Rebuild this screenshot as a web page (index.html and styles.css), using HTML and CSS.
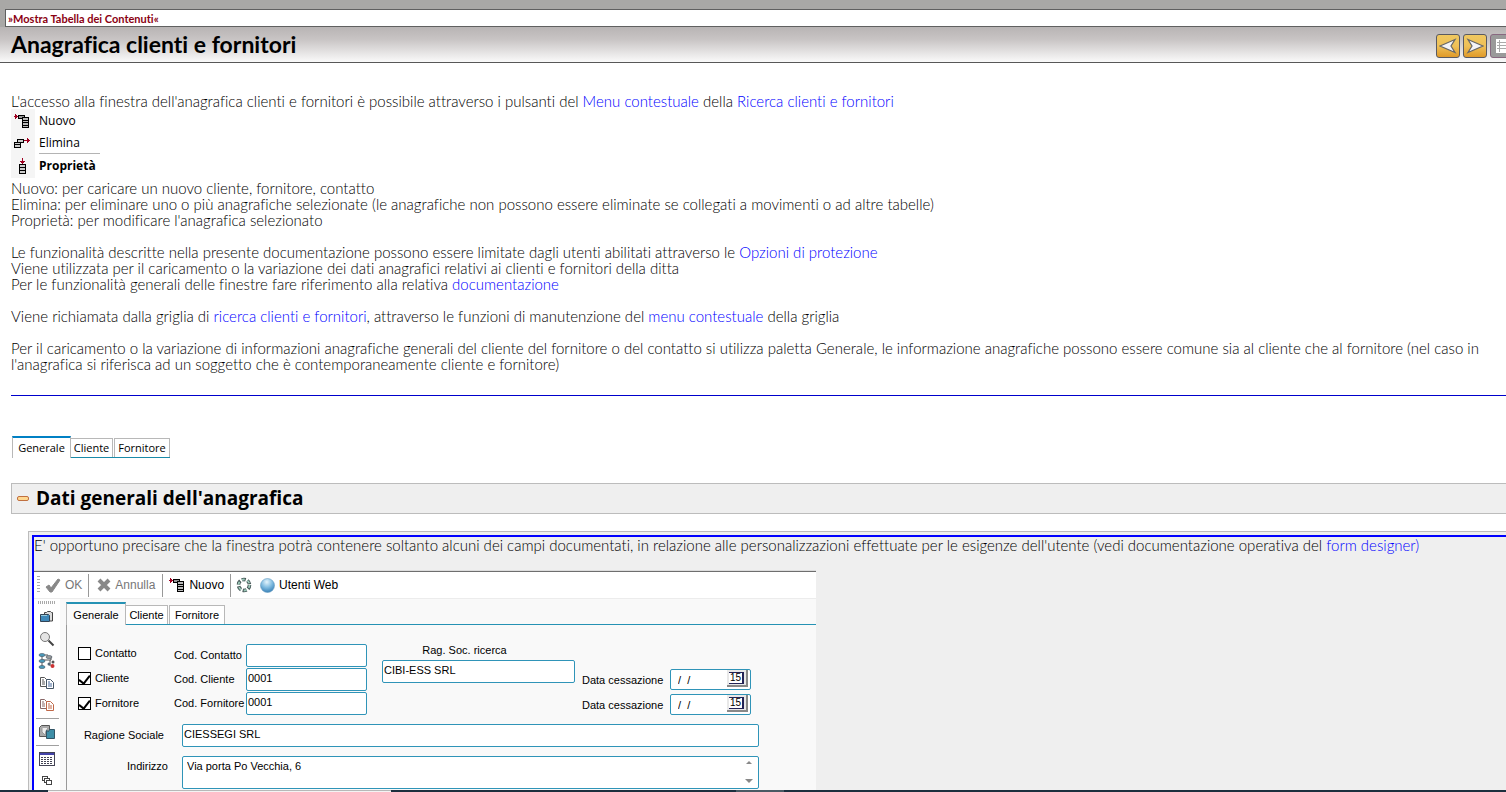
FILE: index.html
```html
<!DOCTYPE html>
<html lang="it">
<head>
<meta charset="utf-8">
<title>Anagrafica clienti e fornitori</title>
<link rel="stylesheet" href="styles.css">
</head>
<body>
<svg class="defs" aria-hidden="true">
  <symbol id="i-new" viewBox="0 0 16 14" shape-rendering="crispEdges">
    <path d="M0 2h4v1H0zM1 0h1v5H1zM2 1h1v3H2z" fill="#a00020"/>
    <path d="M4.500 1.500h6v3h-6z" fill="#999" stroke="#000"/>
    <path d="M8.500 3.500h6v10h-6z" fill="#bbb" stroke="#000"/>
    <path d="M9 6h5v1H9zM9 8h5v1H9zM9 11h5v1H9z" fill="#000"/>
  </symbol>
</svg>

<header class="topbar">
  <div class="toc"><a href="#toc">»Mostra Tabella dei Contenuti«</a></div>
  <div class="titlebar">
    <h1>Anagrafica clienti e fornitori</h1>
    <nav class="pager" aria-label="Pagine">
      <button type="button" class="nav-btn" aria-label="Precedente"><svg width="18" height="16" viewBox="0 0 18 16"><path d="M1 8 16 1.500 12 8l4 6.500z" fill="#f4f4f8" stroke="#666" stroke-width="1.200"/></svg></button>
      <button type="button" class="nav-btn" aria-label="Successiva"><svg width="18" height="16" viewBox="0 0 18 16"><path d="M17 8 2 1.500 6 8l-4 6.500z" fill="#f4f4f8" stroke="#666" stroke-width="1.200"/></svg></button>
      <button type="button" class="nav-btn nav-grey" aria-label="Indice"><svg width="14" height="16" viewBox="0 0 14 16" shape-rendering="crispEdges"><path d="M1 1h13v14H1z" fill="#fff"/><path d="M2 4h12v1H2zM2 7h12v1H2zM2 10h12v1H2zM4 2h1v12H4z" fill="#aaa"/></svg></button>
    </nav>
  </div>
</header>

<main class="content">
  <p>L'accesso alla finestra dell'anagrafica clienti e fornitori è possibile attraverso i pulsanti del <a href="#menu">Menu contestuale</a> della <a href="#ricerca">Ricerca clienti e fornitori</a></p>
  <ul class="ctx">
    <li><span class="ctx-icon"><svg width="16" height="14"><use href="#i-new"/></svg></span><span>Nuovo</span></li>
    <li><span class="ctx-icon"><svg width="16" height="12" viewBox="0 0 16 12" shape-rendering="crispEdges"><path d="M3.500 2.500h6v3h-6zM.500 5.500h6v5h-6z" fill="#ccc" stroke="#000"/><path d="M1 7h5v1H1z"/><path d="M10 3h6v1h-6zM13 1h1v5h-1zM14 2h1v3h-1z" fill="#a00020"/></svg></span><span class="ruled">Elimina</span></li>
    <li class="strong"><span class="ctx-icon"><svg width="9" height="16" viewBox="0 0 9 16" shape-rendering="crispEdges"><path d="M1.500 6.500h6v9h-6z" fill="#ccc" stroke="#000"/><path d="M2 9h5v1H2zM2 12h5v1H2z"/><path d="M4 0h1v6H4zM2 3h5v1H2zM3 4h3v1H3z" fill="#a00020"/></svg></span><span>Proprietà</span></li>
  </ul>
  <p>Nuovo: per caricare un nuovo cliente, fornitore, contatto<br>
  Elimina: per eliminare uno o più anagrafiche selezionate (le anagrafiche non possono essere eliminate se collegati a movimenti o ad altre tabelle)<br>
  Proprietà: per modificare l'anagrafica selezionato</p>
  <p class="para">Le funzionalità descritte nella presente documentazione possono essere limitate dagli utenti abilitati attraverso le <a href="#protezione">Opzioni di protezione</a><br>
  Viene utilizzata per il caricamento o la variazione dei dati anagrafici relativi ai clienti e fornitori della ditta<br>
  Per le funzionalità generali delle finestre fare riferimento alla relativa <a href="#documentazione">documentazione</a></p>
  <p class="para">Viene richiamata dalla griglia di <a href="#ricerca">ricerca clienti e fornitori</a>, attraverso le funzioni di manutenzione del <a href="#menu">menu contestuale</a> della griglia</p>
  <p class="para">Per il caricamento o la variazione di informazioni anagrafiche generali del cliente del fornitore o del contatto si utilizza paletta Generale, le informazione anagrafiche possono essere comune sia al cliente che al fornitore (nel caso in<br>
  l'anagrafica si riferisca ad un soggetto che è contemporaneamente cliente e fornitore)</p>
  <hr>
  <div class="tabs tabs-doc">
    <button type="button" class="tab active">Generale</button><button type="button" class="tab">Cliente</button><button type="button" class="tab">Fornitore</button>
  </div>

  <h2 class="section"><svg width="12" height="5" viewBox="0 0 12 5"><rect x=".500" y=".500" width="11" height="4" rx="1.500" fill="#ffd890" stroke="#c07040"/></svg>Dati generali dell'anagrafica</h2>

  <section class="frame">
    <div class="frame-in">
      <p>E' opportuno precisare che la finestra potrà contenere soltanto alcuni dei campi documentati, in relazione alle personalizzazioni effettuate per le esigenze dell'utente (vedi documentazione operativa del <a href="#form">form designer)</a></p>
      <div class="app">
        <div class="toolbar">
          <span class="grip"></span>
          <button type="button" class="tool off t-ok"><svg width="16" height="15" viewBox="0 0 16 15"><path d="M1 9 4 7l2 3L13 1l2 1L7 14H5z" fill="#888" stroke="#888"/></svg>OK</button>
          <button type="button" class="tool off t-no"><svg width="14" height="14" viewBox="0 0 14 14"><path d="M2 2l10 10M12 2 2 12" stroke="#888" stroke-width="4"/></svg>Annulla</button>
          <button type="button" class="tool t-new"><svg width="16" height="14"><use href="#i-new"/></svg>Nuovo</button>
          <button type="button" class="tool t-cycle" aria-label="Aggiorna"><svg width="16" height="16" viewBox="0 0 16 16"><circle cx="8" cy="8" r="5.500" fill="none" stroke="#455" stroke-width="3.600" stroke-dasharray="4 1.760"/><circle cx="8" cy="8" r="5.500" fill="none" stroke="#9cc8b8" stroke-width="1.800" stroke-dasharray="3 2.760"/></svg></button>
          <button type="button" class="tool"><svg width="15" height="15" viewBox="0 0 15 15"><defs><radialGradient id="globe" cx=".45" cy=".25" r=".8"><stop offset="0" stop-color="#e4f4fc"/><stop offset=".5" stop-color="#7fbbe0"/><stop offset="1" stop-color="#2f78b0"/></radialGradient></defs><circle cx="7.500" cy="7.500" r="7" fill="url(#globe)" stroke="#6aa0c4" stroke-width=".600"/></svg>Utenti Web</button>
        </div>
        <div class="work">
          <aside class="side">
            <span class="hgrip"></span>
            <button type="button" aria-label="Apri"><svg width="16" height="16" viewBox="0 0 16 16"><path d="M5.500 6V3.500h2l1-1h3l1 1h1V12H11" fill="#ddd" stroke="#444"/><path d="M1.500 5.500h8l1 1v6h-9z" fill="#3f88b8" stroke="#345"/><path d="M2 6h6v1H2z" fill="#9cd"/></svg></button>
            <button type="button" aria-label="Cerca"><svg width="16" height="16" viewBox="0 0 16 16"><circle cx="6" cy="6" r="4.500" fill="#e4e4e4" stroke="#777"/><path d="m9.500 9.500 5 5" stroke="#444" stroke-width="2"/></svg></button>
            <button type="button" aria-label="Struttura"><svg width="18" height="18" viewBox="0 0 18 18"><path d="M4 3v12M5 8h8V4M12 8v6M7 3h3" fill="none" stroke="#555"/><g fill="#4a98b8" stroke="#456" stroke-width=".600"><ellipse cx="4" cy="3" rx="3" ry="1.600"/><ellipse cx="4" cy="9" rx="3" ry="1.600"/><ellipse cx="4" cy="15" rx="3" ry="1.600"/><ellipse cx="11" cy="5" rx="3" ry="1.600" fill="#999"/></g><circle cx="11" cy="12" r="1.500" fill="#567"/><circle cx="15" cy="10" r="1.500" fill="#555"/><circle cx="14.500" cy="14" r="2" fill="#c33"/></svg></button>
            <button type="button" aria-label="Copia"><svg width="16" height="14" viewBox="0 0 16 14"><path d="M1.500 1.500h4l2 2v7h-6z" fill="#fff" stroke="#555"/><path d="M3 4h2M3 6h3M3 8h3" stroke="#555"/><path d="M7.500 3.500h4l3 3v6h-7z" fill="#fff" stroke="#456"/><path d="M9 6h2M9 8h4M9 10h4" stroke="#469"/></svg></button>
            <button type="button" aria-label="Incolla"><svg width="16" height="14" viewBox="0 0 16 14"><path d="M1.500 1.500h4l2 2v7h-6z" fill="#fff" stroke="#866"/><path d="M3 4h2M3 6h3M3 8h3" stroke="#866"/><path d="M7.500 3.500h4l3 3v6h-7z" fill="#fff" stroke="#c06848"/><path d="M9 6h2M9 8h4M9 10h4" stroke="#c06848"/></svg></button>
            <span class="rule"></span>
            <button type="button" aria-label="Archivio"><svg width="16" height="16" viewBox="0 0 16 16"><path d="M.500 3.500l2-2h8v11H.500z" fill="#aaa" stroke="#555"/><path d="M3 4v4l3 3 1-4 2-3" fill="#eee" stroke="#999"/><path d="M7.500 6.500l2 1 1-2h5v9h-8z" fill="#3f8fa8" stroke="#356"/></svg></button>
            <span class="rule"></span>
            <button type="button" aria-label="Tabella"><svg width="16" height="14" viewBox="0 0 16 14" shape-rendering="crispEdges"><path d="M.500.500h15v13H.500z" fill="#fff" stroke="#445"/><path d="M1 1h14v2H1z" fill="#44a"/><path d="M2 5.500h12M2 7.500h12M2 9.500h12M2 11.500h12" stroke="#445" stroke-dasharray="2 1"/></svg></button>
            <button type="button" aria-label="Finestre"><svg width="12" height="10" viewBox="0 0 12 10" shape-rendering="crispEdges"><g fill="#fff" stroke="#444"><path d="M1.500.500h5v4h-5z"/><path d="M3.500 2.500h5v4h-5z"/><path d="M5.500 4.500h5v4h-5z"/></g></svg></button>
          </aside>
          <div class="panel">
            <div class="tabs tabs-app">
              <button type="button" class="tab active">Generale</button><button type="button" class="tab">Cliente</button><button type="button" class="tab">Fornitore</button>
            </div>
            <form class="form">
              <div class="top">
                <div class="checks">
                  <label><input type="checkbox">Contatto</label>
                  <label><input type="checkbox" checked>Cliente</label>
                  <label><input type="checkbox" checked>Fornitore</label>
                </div>
                <div class="codes">
                  <label for="c1">Cod. Contatto</label><input class="field" id="c1" type="text">
                  <label for="c2">Cod. Cliente</label><input class="field" id="c2" type="text" value="0001">
                  <label for="c3">Cod. Fornitore</label><input class="field" id="c3" type="text" value="0001">
                </div>
                <div class="rag">
                  <label for="rs">Rag. Soc. ricerca</label><input class="field" id="rs" type="text" value="CIBI-ESS SRL">
                </div>
                <div class="dates">
                  <label for="d1">Data cessazione</label><span class="date"><input id="d1" type="text" value="/  /"><button type="button" aria-label="Calendario"><b>15</b></button></span>
                  <label for="d2">Data cessazione</label><span class="date"><input id="d2" type="text" value="/  /"><button type="button" aria-label="Calendario"><b>15</b></button></span>
                </div>
              </div>
              <div class="row"><label for="soc">Ragione Sociale</label><input class="field" id="soc" type="text" value="CIESSEGI SRL"></div>
              <div class="row row-wide"><label for="ind">Indirizzo</label>
                <div class="area"><textarea id="ind">Via porta Po Vecchia, 6</textarea><span class="arrows"><svg width="8" height="4" viewBox="0 0 8 4"><path d="M4 0 7 3H1z" fill="#888"/></svg><svg width="8" height="4" viewBox="0 0 8 4"><path d="M0 0h8L4 4z" fill="#888"/></svg></span></div>
              </div>
            </form>
          </div>
        </div>
      </div>
    </div>
  </section>
</main>
<footer class="taskbar"><span class="t1"></span><span class="t2"></span><span class="t3"></span><span class="t4"></span></footer>
</body>
</html>
```
FILE: styles.css
```css
* { box-sizing: border-box; }
html, body { height: 100%; }
body {
  margin: 0;
  overflow: hidden;
  background: #fff;
  color: #000;
  font: 300 15px/16px "Century Gothic", Lato, sans-serif;
  font-variant-ligatures: none;
}
p, h1, h2, ul { margin: 0; padding: 0; }
button, input, textarea { font: inherit; color: inherit; margin: 0; padding: 0; border: 0; background: none; border-radius: 0; }
svg { display: block; flex: none; }
a { color: #00f; text-decoration: none; }
.defs { display: none; }

.topbar { padding-top: 9px; background: #a9a8a6; border-bottom: 1px solid #585858; overflow: hidden; }
.toc {
  margin-left: 5px;
  height: 18px;
  padding-left: 2px;
  border: 1px solid #606060;
  border-right: 0;
  background: #fff;
  font-size: 11px;
  line-height: 18px;
}
.toc a { color: #8b0012; font-weight: 700; }
.titlebar {
  display: flex;
  align-items: flex-start;
  justify-content: space-between;
  height: 35px;
  padding-left: 11px;
  background: linear-gradient(#b8b4b4, #c8c4c4 35%, #fafafa);
}
h1 { font-size: 23px; line-height: 34px; font-weight: 700; }
.pager { display: flex; gap: 3px; margin-right: -8px; padding-top: 7px; }
.nav-btn {
  display: grid;
  place-items: center;
  width: 24px;
  height: 24px;
  border: 1px solid #5a5a60;
  border-radius: 3px;
  background: linear-gradient(#f0c860, #eec058 50%, #e09a28);
}
.nav-grey { background: #9a9a9a; border-color: #886880; }

.content { padding: 30px 0 0 11px; white-space: nowrap; }
.para { margin-top: 16px; }

.ctx { list-style: none; margin-bottom: 2px; font: 12px/16px "Segoe UI", "Open Sans", sans-serif; }
.ctx li { display: flex; align-items: center; gap: 4px; height: 22px; }
.ctx li:first-child { height: 23px; }
.ctx li:last-child { height: 24px; }
.ctx-icon { display: grid; place-items: center; width: 24px; height: 100%; padding-right: 2px; background: #f5f5f5; }
.ctx .ruled { width: 61px; height: 22px; line-height: 22px; border-bottom: 1px solid #b4b4b4; }
.ctx .strong { font-weight: 700; }

hr { height: 1px; margin: 23px 0 0; border: 0; background: #00c; }

.tabs { display: flex; align-items: flex-end; }
.tab { height: 20px; padding: 0 2px; border: 1px solid #b8b8b8; border-bottom: 0; background: #fff; font-size: 11px; line-height: 18px; }
.tab + .tab { border-left: 0; }
.tab + .tab + .tab { border-left: 1px solid #b8b8b8; margin-left: 1px; }
.tabs-doc { width: 159px; margin-top: 39px; padding: 1px 0 0 1px; font: 400 11px/18px Tahoma, "Open Sans", sans-serif; background: linear-gradient(#1a8aa8, #1a8aa8) bottom right / 100px 1px no-repeat; }
.tabs-doc .tab { width: 56px; height: 19px; margin-bottom: 1px; }
.tabs-doc .tab.active { width: 59px; height: 22px; margin-bottom: 0; border-top: 2px solid #0080c4; }
.tabs-doc .tab:nth-child(2) { width: 42px; }

.section {
  display: flex;
  align-items: center;
  gap: 7px;
  margin-top: 25px;
  height: 31px;
  padding-left: 5px;
  border: 1px solid #bcbcbc;
  border-right: 0;
  background: #efefef;
  font: 700 19px/29px Tahoma, "Open Sans", sans-serif;
}
.frame { margin: 17px 0 0 17px; padding: 3px 0 0 3px; border: 1px solid #bcbcbc; border-right: 0; background: #efefef; }
.frame-in { border: 2px solid #00f; border-right: 0; }

.app { width: 782px; margin-top: 18px; border-top: 1px solid #6e6e6e; box-shadow: 0 -1px #dcdcdc; background: #f9f9f9; font: 400 12px/14px Arial, "Liberation Sans", sans-serif; }
.toolbar { display: flex; align-items: center; height: 27px; padding-left: 3px; border-bottom: 1px solid #ececec; background: #fff; }
.grip { width: 3px; height: 18px; margin-right: 5px; background: repeating-linear-gradient(#aaa 0 1px, #fff 1px 3px); }
.tool { display: flex; align-items: center; gap: 4px; height: 23px; }
.off { color: #777; }
.t-ok, .t-no, .t-new { padding-right: 6px; border-right: 1px solid #999; }
.t-no { padding: 0 7px 0 8px; }
.t-new { padding-left: 6px; }
.t-cycle { padding: 0 8px 0 5px; }

.work { display: flex; gap: 6px; }
.side { display: flex; flex-direction: column; align-items: center; width: 26px; padding-top: 2px; background: #fff; }
.side button { display: grid; place-items: center; width: 24px; height: 22px; }
.hgrip { width: 18px; height: 3px; margin-bottom: 2px; background: repeating-linear-gradient(90deg, #aaa 0 1px, #fff 1px 2px); }
.rule { width: 23px; height: 1px; margin: 2px 0; background: #a0a0a0; }

.panel { flex: 1; min-width: 0; }
.tabs-app { padding-top: 3px; background: linear-gradient(#2592b4, #2592b4) bottom right / 690px 1px no-repeat; }
.tabs-app .tab { width: 56px; height: 19px; margin-bottom: 1px; }
.tabs-app .tab.active { width: 60px; height: 23px; margin-bottom: 0; border-top: 2px solid #2592b4; background: #fafafa; }
.tabs-app .tab:nth-child(2) { width: 42px; }

.form { padding: 19px 0 10px 11px; border-left: 1px solid #999; font-size: 11px; line-height: 14px; }
.top { display: flex; align-items: flex-start; }
.field { height: 23px; padding: 0 1px 4px; border: 1px solid #2f94b8; border-radius: 2px; background: #fff; }
.checks { display: grid; gap: 11px; width: 96px; padding-top: 2px; }
.checks label { display: flex; align-items: center; gap: 4px; }
input[type="checkbox"] { appearance: none; display: grid; place-items: center; width: 13px; height: 13px; border: 1px solid #000; background: #fff; }
input[type="checkbox"]:checked::after { content: ""; width: 5px; height: 9px; margin-bottom: 2px; border: solid #000; border-width: 0 2px 2px 0; transform: rotate(38deg); }
.codes { display: grid; grid-template-columns: 72px 121px; gap: 1px 0; align-items: center; }
.codes label { padding-bottom: 1px; }
.rag { display: grid; gap: 3px; width: 193px; margin-left: 15px; text-align: center; }
.rag label { padding-right: 28px; line-height: 13px; }
.dates { display: grid; grid-template-columns: 88px 81px; gap: 4px 0; align-items: center; margin: 25px 0 0 7px; }
.date { display: flex; height: 21px; padding: 0 2px 0 7px; border: 1px solid #2f94b8; border-radius: 2px; background: #fff; }
.date input { flex: 1; min-width: 0; }
.date button { display: grid; place-items: center; width: 21px; height: 17px; border: solid #888; border-width: 0 2px 2px 0; background: #e8e8e8; }
.date b { padding: 0 1px; border: solid #225; border-width: 1px 2px 1px 0; font: 400 10px/10px "Liberation Sans", sans-serif; background: #fff; }
.row { display: grid; grid-template-columns: 104px 577px; margin-top: 9px; }
.row > label { padding: 4px 18px 0 0; text-align: right; }
.row-wide > label { padding: 3px 14px 0 0; }
.area { display: flex; height: 33px; padding: 2px 5px 3px 4px; border: 1px solid #2f94b8; border-radius: 2px; background: #fff; }
.area textarea { flex: 1; resize: none; overflow: hidden; outline: 0; }
.arrows { display: flex; flex-direction: column; justify-content: space-between; padding: 2px 0; }

.taskbar { position: fixed; inset: auto 0 0 0; display: flex; height: 2px; background: #1c2f3e; }
.t1 { flex: 0 0 48px; }
.t2 { flex: 0 0 343px; border-top: 1px solid #b8b8b8; background: #f4f4f4; }
.t3 { flex: 0 0 345px; }
.t4 { flex: 0 0 48px; background: #4a5a64; }
```
